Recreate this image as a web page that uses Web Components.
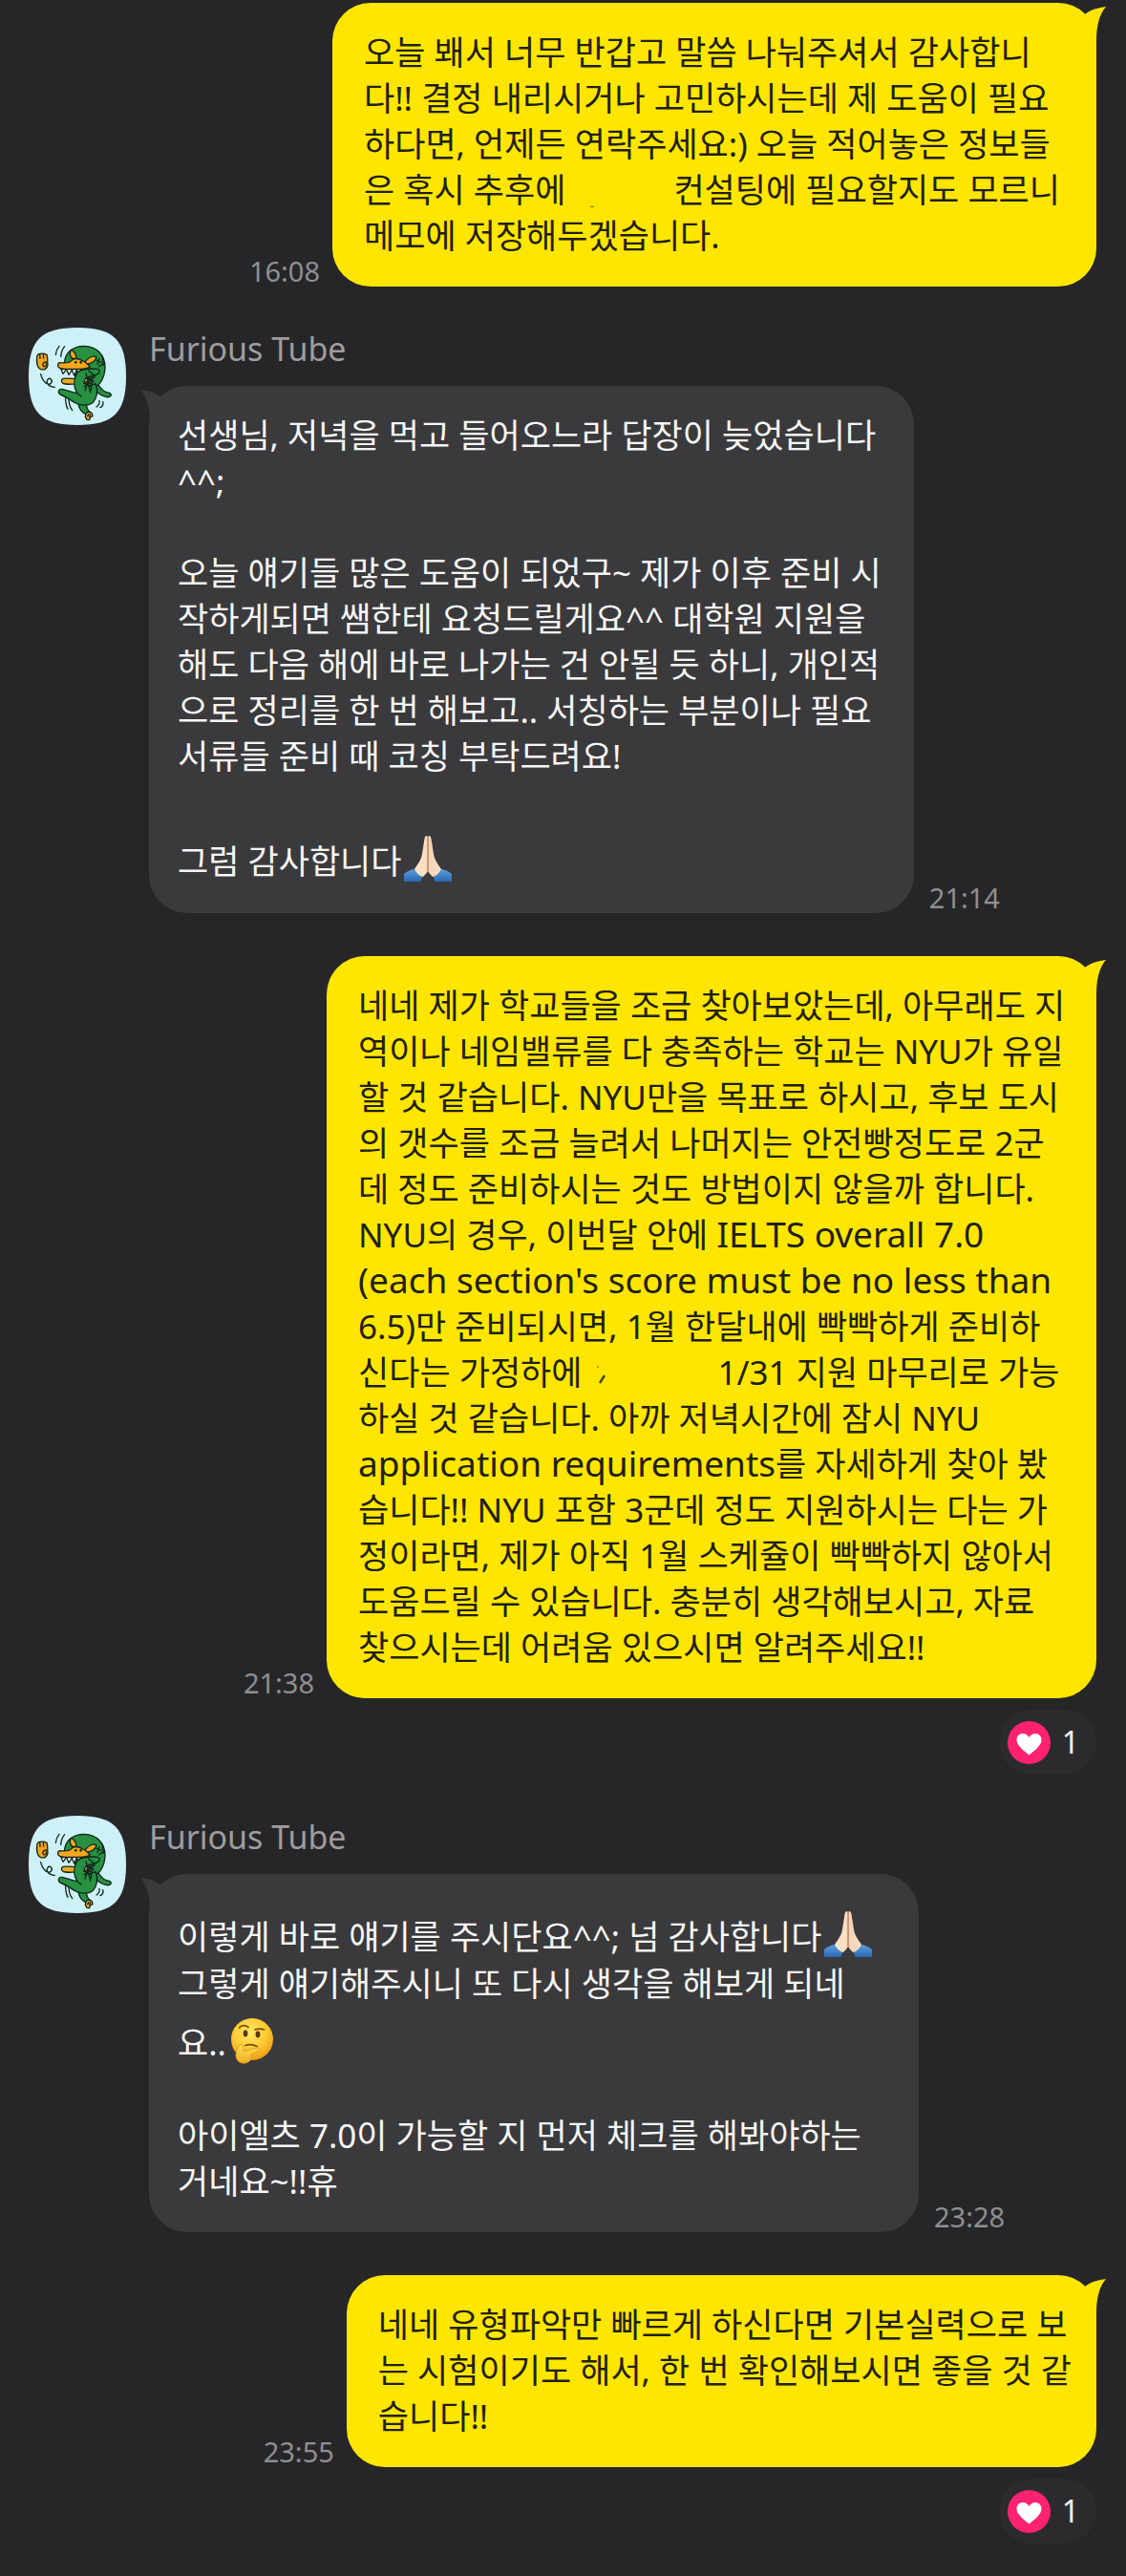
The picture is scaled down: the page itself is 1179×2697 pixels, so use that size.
<!DOCTYPE html>
<html lang="ko">
<head>
<meta charset="utf-8">
<meta name="viewport" content="width=device-width, initial-scale=1">
<title>Furious Tube</title>
<style>
  body {
    margin: 0;
    min-height: 100vh;
    background: #262628;
    color: #f5f5f6;
    font-family: "Noto Sans", "Noto Sans CJK KR", sans-serif;
    font-size: 35px;
    line-height: 48px;
  }
  [lang="en"] { font-size: 37px; line-height: 1; }
  .wide { --bubble-min: 800px; }
  .widest { --bubble-min: 806px; }
</style>
</head>
<body>

<template id="tpl-room">
  <style>
    :host { display: flex; flex-direction: column; gap: 43px; padding: 3px 31px 33px 30px; }
  </style>
  <slot></slot>
</template>

<template id="tpl-message">
  <style>
    :host { display: flex; gap: 24px; align-items: flex-start; }
    :host([side="me"]) { justify-content: flex-end; --bubble: #ffe600; --ink: #21200f; }
    :host([side="them"]) { --bubble: #3a3a3c; --ink: #f5f5f6; padding-bottom: 2px; }
    .stack { display: flex; flex-direction: column; min-width: 0; }
    :host([side="me"]) .stack { align-items: flex-end; }
    .name { color: #9d9d9f; line-height: 44px; margin: 0 0 17px; font-size: 34px; font-weight: 400; }
    .line { display: flex; align-items: flex-end; gap: 16px; }
    :host([side="me"]) .line { flex-direction: row-reverse; gap: 13px; }
    .bubble {
      position: relative;
      box-sizing: border-box;
      min-width: var(--bubble-min, 0);
      padding: 28px 26px 29px 33px;
      border-radius: 40px;
      background: var(--bubble);
      color: var(--ink);
      white-space: nowrap;
    }
    :host([side="them"]) .bubble { padding: 28px 34px 29px 30px; }
    .tail { position: absolute; top: 0; width: 32px; height: 40px; fill: var(--bubble); }
    :host([side="me"]) .tail { right: -10px; }
    :host([side="them"]) .tail { left: -9px; transform: scaleX(-1); }
    time { color: #8f8f91; font-size: 29px; line-height: 32px; }
    [hidden] { display: none; }
  </style>
  <slot name="avatar"></slot>
  <div class="stack">
    <h2 class="name" hidden></h2>
    <div class="line">
      <div class="bubble">
        <svg class="tail" viewBox="0 0 32 40" aria-hidden="true"><path d="M10 12C16 7 24 5 32 4C25 12 22 24 22 40H2Z"/></svg>
        <slot></slot>
      </div>
      <time></time>
    </div>
    <slot name="reaction"></slot>
  </div>
</template>

<template id="tpl-reaction">
  <style>
    :host { display: block; margin-top: 12px; }
    button {
      display: flex; align-items: center; gap: 12px;
      height: 68px; padding: 0 18px 0 9px;
      border: 0; border-radius: 34px; background: #2b2b2d; color: #f5f5f6;
      font: inherit; font-size: 32px; line-height: 44px;
    }
    svg { width: 45px; height: 45px; display: block; }
  </style>
  <button type="button" aria-label="하트">
    <svg viewBox="0 0 45 45" aria-hidden="true">
      <circle cx="22.5" cy="22.5" r="22.5" fill="#ff2272"/>
      <path d="M22.5 35.5C18 31.500 9.500 26 9.500 19.500C9.500 15.500 12.500 13 16 13C19 13 21.500 15 22.500 17C23.500 15 26 13 29 13C32.500 13 35.500 15.500 35.500 19.500C35.500 26 27 31.500 22.500 35.500Z" fill="#fff"/>
    </svg>
    <span><slot></slot></span>
  </button>
</template>

<template id="tpl-avatar">
  <style>
    :host { display: block; flex: none; width: 102px; height: 102px; }
    svg { display: block; width: 100%; height: 100%; }
  </style>
  <svg viewBox="30 36 306 306" role="img" aria-label="Furious Tube" stroke-linecap="round" stroke-linejoin="round">
    <path fill="#cef1f8" d="M183 36C297 36 336 75 336 189C336 303 297 342 183 342C69 342 30 303 30 189C30 75 69 36 183 36Z"/>
    <g stroke="#10261c" stroke-width="4" fill="none">
      <path d="M126 94C120 101 116 110 115 121M143 95C135 104 132 115 131 127"/>
      <path d="M68 182C71 196 78 207 88 212C101 217 107 203 99 197C92 193 85 202 88 210C91 218 102 222 112 223"/>
      <path d="M146 249C145 264 147 280 153 292M157 254C155 269 158 284 167 296M252 265C254 273 249 281 243 285M263 269C266 277 261 285 255 287"/>
      <path fill="#f5a71b" d="M57 123C62 115 79 117 87 121C91 132 88 143 90 153C89 164 80 170 68 167C55 162 54 139 57 123Z"/>
      <path d="M65 119L66 133M76 118L77 132M88 146C79 139 71 151 77 158C84 160 88 154 84 149"/>
      <path fill="#279141" d="M243 210C255 221 261 238 278 240C289 241 294 250 282 254C263 256 251 243 239 235Z"/>
      <path fill="#279141" d="M185 270C187 289 196 303 212 309L222 301C213 294 212 286 211 274Z"/>
      <path fill="#f5a71b" d="M210 306C213 299 224 299 229 306L231 314L223 318L221 326L213 325L208 316Z"/>
      <path d="M215 314L219 308M221 316L224 309"/>
      <path fill="#279141" d="M142 151C142 118 165 94 204 94C244 95 270 122 270 160C269 199 250 224 222 232L180 210L172 160Z"/>
      <path fill="#f5a71b" d="M163 106C173 110 180 121 180 135L164 131C159 121 159 113 163 106Z"/>
      <path fill="#f5a71b" d="M207 145C215 132 229 124 242 127C243 139 230 149 211 151Z"/>
      <path fill="#f5a71b" d="M128 146C145 148 158 147 164 140C171 131 187 132 197 139C207 142 215 151 223 158C211 169 184 167 157 166C143 166 124 168 122 157C121 151 123 147 128 146Z"/>
      <path fill="#fff" d="M132 167L138 181L149 167L156 184L166 169L173 186L181 169L189 184L198 167Z"/>
      <path fill="#f5a71b" d="M138 196C160 194 180 199 200 196C214 194 222 199 228 195C225 208 209 216 196 214C175 211 150 217 138 211C131 205 132 199 138 196Z"/>
      <path fill="#279141" d="M184 176C201 164 225 164 246 166C258 169 252 180 241 185C227 191 213 188 206 199C202 209 210 216 221 219L240 212C250 234 244 259 231 272C215 284 190 280 174 271C157 260 140 250 129 246C120 239 124 228 135 229C151 233 169 240 183 242C170 223 170 198 184 176Z"/>
      <path d="M181 241L195 252M210 180L224 240M222 187L207 234M232 182L226 232M203 211L238 191M204 221L235 204M218 171L235 185M244 139L258 145M251 134L246 151M262 129L265 154M250 159L262 151"/>
    </g>
    <circle cx="178" cy="145" r="4" fill="#10261c"/><circle cx="194" cy="145" r="4" fill="#10261c"/>
  </svg>
</template>

<template id="tpl-emoji">
  <style>
    /* The box rises above the text line, so a line holding an emoji is taller. */
    :host { display: inline-block; width: 50px; height: 50px; margin: 10px 2px 3px; vertical-align: -12px; }
    svg { display: block; width: 50px; height: 50px; }
    :host([name="pray"]) .think, :host([name="think"]) .pray { display: none; }
  </style>
  <svg class="pray" viewBox="0 0 50 50" role="img" aria-label="🙏🏻">
    <defs>
      <linearGradient id="sleeve" x2="0" y2="1"><stop stop-color="#5d9edc"/><stop offset="1" stop-color="#2a69b4"/></linearGradient>
      <linearGradient id="skin"><stop stop-color="#fbe3c9"/><stop offset=".46" stop-color="#fbdcc0"/><stop offset=".5" stop-color="#b98668"/><stop offset=".55" stop-color="#f6d3b4"/><stop offset="1" stop-color="#f9dfc6"/></linearGradient>
    </defs>
    <path fill="url(#sleeve)" d="M0 49V41C3 38 8 36 13 36L20 43L17 49ZM50 49V41C47 38 42 36 37 36L30 43L33 49Z"/>
    <path fill="url(#skin)" d="M21.500 4C22 .500 24.500 0 25 2.500C25.500 0 28 .500 28.500 4L31 20C32 27 36 31 39 36C37 40 34 43 30 44C28 42 26 40 25 38C24 40 22 42 20 44C16 43 13 40 11 36C14 31 18 27 19 20Z"/>
    <path fill="none" stroke="#be8c70" stroke-width="1" d="M25 3V39"/>
  </svg>
  <svg class="think" viewBox="0 0 50 50" role="img" aria-label="🤔">
    <defs>
      <radialGradient id="face" cx=".45" cy=".35" r=".65"><stop stop-color="#ffe866"/><stop offset=".6" stop-color="#fdcb34"/><stop offset="1" stop-color="#ee9d16"/></radialGradient>
      <linearGradient id="hand" x2="0" y2="1"><stop stop-color="#ffdf5c"/><stop offset="1" stop-color="#f3ad24"/></linearGradient>
    </defs>
    <circle cx="25" cy="24" r="22" fill="url(#face)"/>
    <ellipse cx="18" cy="18" rx="2.400" ry="3.400" fill="#5c390b"/><ellipse cx="31" cy="19" rx="2.400" ry="3.400" fill="#5c390b"/>
    <path d="M11.500 12C14 9 18 9 21 11.500M28 14C31 13 35 13 37.500 14M18 30.500C22 29 26 29.500 30 31.500" fill="none" stroke="#7b4d0e" stroke-width="1.700" stroke-linecap="round"/>
    <path fill="url(#hand)" stroke="#dc8e16" stroke-width=".8" d="M12 30C14 28 16 31 16 36C21 37 25 33 31 33C34 34 33 36 30 37L24 40C25 44 23 48 18 49C12 50 8 46 8 41C8 37 9 33 12 30Z"/>
  </svg>
</template>

<template id="tpl-blank">
  <style>
    :host { display: inline-block; height: 32px; width: 113px; vertical-align: -8px; }
    :host([size="wide"]) { width: 142px; }
    svg { display: none; width: 40px; height: 32px; }
    :host([size="wide"]) .slash, :host(:not([size])) .dot { display: block; }
  </style>
  <svg class="dot" viewBox="0 0 40 32" aria-hidden="true"><path d="M26 28.500h4" stroke="#9a8c12" stroke-width="1.500"/></svg>
  <svg class="slash" viewBox="0 0 40 32" aria-hidden="true"><path d="M15 5h2" stroke="#b0a010" stroke-width="2"/><path d="M23 14L18 22" stroke="#4a4412" stroke-width="2.500"/></svg>
</template>

<chat-room>
  <chat-message class="wide" side="me" time="16:08">오늘 봬서 너무 반갑고 말씀 나눠주셔서 감사합니<br>다!! 결정 내리시거나 고민하시는데 제 도움이 필요<br>하다면, 언제든 연락주세요:) 오늘 적어놓은 정보들<br>은 혹시 추후에<chat-blank></chat-blank>컨설팅에 필요할지도 모르니<br>메모에 저장해두겠습니다.</chat-message>

  <chat-message side="them" name="Furious Tube" time="21:14"><chat-avatar slot="avatar"></chat-avatar>선생님, 저녁을 먹고 들어오느라 답장이 늦었습니다<br>^^;<br><br>오늘 얘기들 많은 도움이 되었구~ 제가 이후 준비 시<br>작하게되면 쌤한테 요청드릴게요^^ 대학원 지원을<br>해도 다음 해에 바로 나가는 건 안될 듯 하니, 개인적<br>으로 정리를 한 번 해보고.. 서칭하는 부분이나 필요<br>서류들 준비 때 코칭 부탁드려요!<br><br>그럼 감사합니다<chat-emoji name="pray"></chat-emoji></chat-message>

  <chat-message class="widest" side="me" time="21:38">네네 제가 학교들을 조금 찾아보았는데, 아무래도 지<br>역이나 네임밸류를 다 충족하는 학교는 NYU가 유일<br>할 것 같습니다. NYU만을 목표로 하시고, 후보 도시<br>의 갯수를 조금 늘려서 나머지는 안전빵정도로 2군<br>데 정도 준비하시는 것도 방법이지 않을까 합니다.<br>NYU의 경우, 이번달 안에 <span lang="en">IELTS overall 7.0</span><br><span lang="en">(each section's score must be no less than</span><br>6.5)만 준비되시면, 1월 한달내에 빡빡하게 준비하<br>신다는 가정하에<chat-blank size="wide"></chat-blank>1/31 지원 마무리로 가능<br>하실 것 같습니다. 아까 저녁시간에 잠시 NYU<br><span lang="en">application requirements</span>를 자세하게 찾아 봤<br>습니다!! NYU 포함 3군데 정도 지원하시는 다는 가<br>정이라면, 제가 아직 1월 스케쥴이 빡빡하지 않아서<br>도움드릴 수 있습니다. 충분히 생각해보시고, 자료<br>찾으시는데 어려움 있으시면 알려주세요!!<chat-reaction slot="reaction">1</chat-reaction></chat-message>

  <chat-message class="widest" side="them" name="Furious Tube" time="23:28"><chat-avatar slot="avatar"></chat-avatar>이렇게 바로 얘기를 주시단요^^; 넘 감사합니다<chat-emoji name="pray"></chat-emoji><br>그렇게 얘기해주시니 또 다시 생각을 해보게 되네<br>요..<chat-emoji name="think"></chat-emoji><br><br>아이엘츠 7.0이 가능할 지 먼저 체크를 해봐야하는<br>거네요~!!휴</chat-message>

  <chat-message side="me" time="23:55">네네 유형파악만 빠르게 하신다면 기본실력으로 보<br>는 시험이기도 해서, 한 번 확인해보시면 좋을 것 같<br>습니다!!<chat-reaction slot="reaction">1</chat-reaction></chat-message>
</chat-room>

<script>
  class TemplateElement extends HTMLElement {
    constructor() {
      super();
      const template = document.getElementById(this.constructor.template);
      this.attachShadow({ mode: "open" }).append(template.content.cloneNode(true));
    }
  }
  class ChatRoom extends TemplateElement { static template = "tpl-room"; }
  class ChatAvatar extends TemplateElement { static template = "tpl-avatar"; }
  class ChatEmoji extends TemplateElement { static template = "tpl-emoji"; }
  class ChatBlank extends TemplateElement { static template = "tpl-blank"; }
  class ChatReaction extends TemplateElement { static template = "tpl-reaction"; }
  class ChatMessage extends TemplateElement {
    static template = "tpl-message";
    connectedCallback() {
      const time = this.shadowRoot.querySelector("time");
      time.textContent = this.getAttribute("time");
      time.dateTime = this.getAttribute("time");
      const name = this.shadowRoot.querySelector(".name");
      name.hidden = !this.hasAttribute("name");
      name.textContent = this.getAttribute("name") || "";
    }
  }
  customElements.define("chat-room", ChatRoom);
  customElements.define("chat-avatar", ChatAvatar);
  customElements.define("chat-emoji", ChatEmoji);
  customElements.define("chat-blank", ChatBlank);
  customElements.define("chat-reaction", ChatReaction);
  customElements.define("chat-message", ChatMessage);
</script>
</body>
</html>
